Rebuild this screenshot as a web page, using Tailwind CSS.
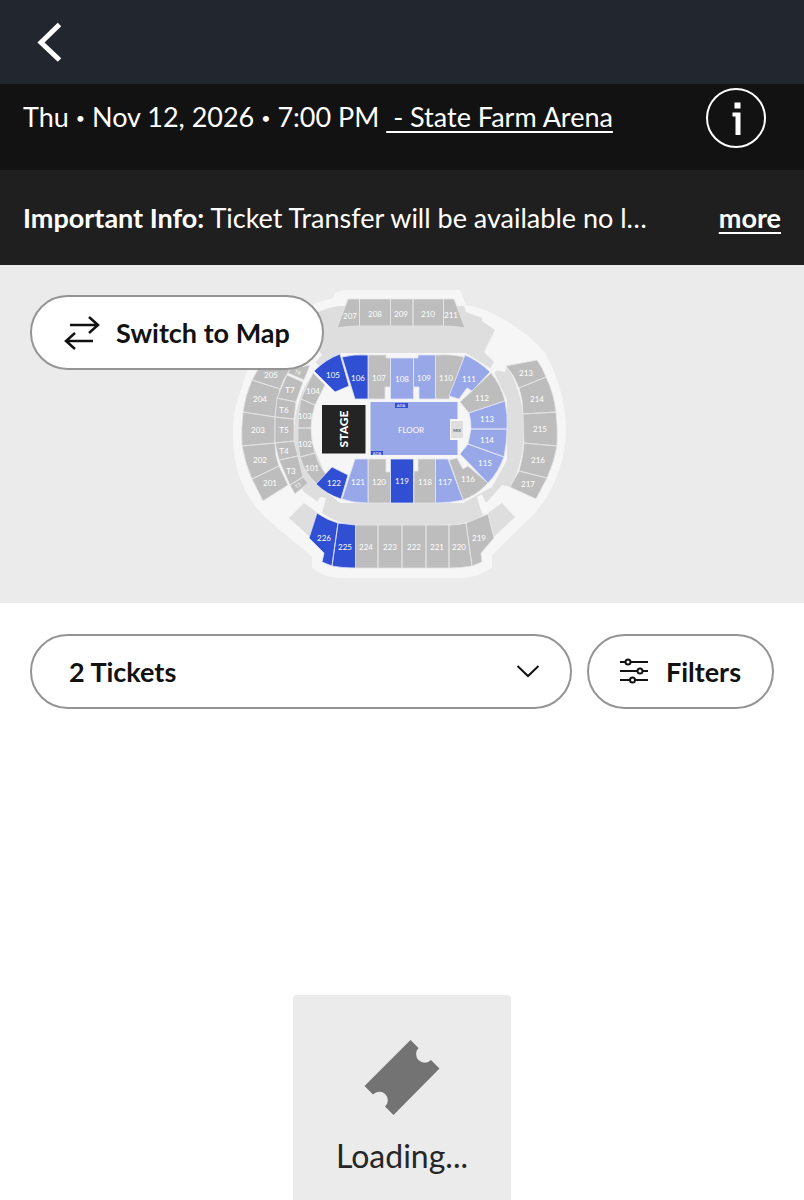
<!DOCTYPE html>
<html lang="en">
<head>
  <meta charset="UTF-8">
  <meta name="viewport" content="width=device-width, initial-scale=1.0">
  <title>State Farm Arena - Tickets</title>
  <script src="https://cdn.jsdelivr.net/npm/@tailwindcss/browser@4"></script>
</head>

<body class="min-h-screen flex flex-col bg-white text-[#121212] font-['Lato',sans-serif] text-[27px] leading-9">

  <!-- top bar -->
  <header class="bg-[#22262e] h-[84px] flex items-center px-[37px]">
    <button aria-label="Back" class="text-white">
      <svg class="w-6 h-10" viewBox="0 0 24 40" fill="none" stroke="currentColor" stroke-width="5">
        <path d="M22.500 2.500L4 20.500L22.500 38" />
      </svg>
    </button>
  </header>

  <!-- event info -->
  <section class="bg-[#121212] text-white h-[86px] flex items-start justify-between pl-[23px] pr-[37px]">
    <p class="mt-[15px] whitespace-nowrap">Thu <span class="text-base align-[3px]">•</span> Nov 12, 2026 <span class="text-base align-[3px]">•</span> 7:00 PM <a href="#venue" class="underline decoration-2 underline-offset-4 whitespace-pre"> - State Farm Arena</a></p>
    <button aria-label="Event info" class="mt-[3px] shrink-0">
      <svg class="size-[62px]" viewBox="0 0 62 62" fill="none">
        <circle cx="31" cy="31" r="29" stroke="white" stroke-width="2" />
        <path d="M29.500 15.500h6v6h-6zM27.500 25.500h8v22.500h-5v-18.500h-3z" fill="white" />
      </svg>
    </button>
  </section>

  <section class="bg-[#1f1f1f] text-white h-[95px] flex items-center justify-between gap-4 px-[23px]">
    <p class="whitespace-nowrap"><b class="font-bold">Important Info:</b> Ticket Transfer will be available no l…</p>
    <a href="#info" class="font-bold underline decoration-2 underline-offset-4">more</a>
  </section>

  <!-- seat map -->
  <section class="relative bg-[#ebebeb] flex justify-center py-6">
    <svg class="w-[340px] h-[290px]" viewBox="232 289 340 290" role="img" aria-label="Seat map">
      <path fill="#f6f6f6" d="M345 290H458Q461 290 462 295L466 305Q488 309 505 320Q530 335 545 353Q557 374 562 397Q566 415 566 433Q565 452 560 467Q554 486 545 500L535 513L492 555V567Q478 578 462 578H340Q322 577 312 568V557L265 517Q248 500 242 483Q233 465 233 430Q233 408 242 387Q250 350 297 313Q312 303 333 298L335 293Z" />
      <g fill="#dedede">
        <path d="M300 323Q318 309 338 306H464L466 312L482 318V321L495 330L484 352L494 362L490 369L505 372L507 366Q524 395 524 430Q523 466 510 487L502 485L487 502H484L478 496L480 504L484 514Q470 525 440 525H355Q338 524 322 513L325 501L318 502L304 492Q290 470 294 430Q296 398 310 378L316 370L314 364L322 355Z" />
        <path d="M304 503L314 510L317 513L310 537L289 518ZM502 503L515 517L494 537L488 513Z" />
      </g>
      <path fill="#f6f6f6" d="M316 370L341 353H466L493 370L507 400V460L492 487L463 503H340L316 484L325 474L311 440V405L325 385L314 373Z" />
      <path fill="#f6f6f6" d="M305 372L312 360L320 366L316 376ZM490 370L494 364L498 369L493 375ZM320 497L326 498L321 514L313 510ZM477 497L482 494L489 510L482 514Z" />

      <g fill="#bdbdbd" stroke="#e6e6e6" stroke-width="0.8">
        <!-- upper level -->
        <path d="M348 299H359.500V326Q347 326 337 328ZM359.500 299H390.500V326H359.500ZM390.500 299H413V326H390.500ZM413 299H443.500V326H413ZM443.500 299H454L465 328Q455 326 443.500 326Z" />
        <path d="M262 362L290 369Q284 378 280 389L252 380ZM252 380L280 389Q276 404 275 417L243 412Q245 396 252 380ZM243 412L275 417V443L242 446Q241 428 243 412ZM242 446L275 443Q275 456 279 466L252 479Q245 463 242 446ZM252 479L279 466L288 485L263 501Z" />
        <path d="M506 366L537 360Q543 368 546 377L519 388Q514 375 506 366ZM519 388L546 377Q554 393 556 412L523 414Q523 400 519 388ZM523 414L556 412Q558 430 557 446L524 443ZM524 443L557 446Q554 463 547 478L519 471Q523 458 524 443ZM519 471L547 478L536 499L510 487Z" />
        <path d="M355.500 525H378V568H355.500ZM378 525H402V568H378ZM402 525H426V568H402ZM426 525H449V568H426ZM449 525Q458 525 466 523L472 566Q461 568 449 568ZM466 523L488 514L494 538L481 553L482 562L472 566Z" />
        <!-- terrace -->
        <path d="M290 369L310 365L304 380L288 373ZM287 375L303 382L296 402L277 398ZM277 398L296 402L294 419L275 417ZM275 417L294 419V441L275 443ZM275 443L294 441L298 456L279 460ZM279 460L298 456L303 477L290 485ZM290 485L303 477L308 483L295 494Z" />
        <!-- lower level -->
        <path d="M313 373L325 385L315 405L301 399ZM301 399L315 405Q311 417 311 428H298Q298 412 301 399ZM298 428H311Q311 441 315 453L300 457Q297 443 298 428ZM300 457L315 453Q319 466 326 474L317 484Q305 474 300 457Z" />
        <path d="M368 355H386V358H390.500V387H385V399H368ZM435.500 355Q452 354 464 357L449 399H435.500ZM491 373Q501 385 505 401L469 413L460 402ZM488 483Q477 495 463 500L449 460L457 458L463 469L468 466ZM414 471H418V459H435.500V503H414ZM368 459H386V472H390.500V503H368Z" />
      </g>

      <g fill="#98a7e8" stroke="#e3e7fa" stroke-width="0.8">
        <path d="M390.500 358H413.500V399H390.500ZM413.500 358H418V355H435.500V399H419V387H413.500ZM465 355Q479 361 490 372L472 391L467 388L459 399L449 396Z" />
        <path d="M505 401Q508 415 507 429H471Q471 420 469 413ZM471 429H507Q507 443 504 457L468 444ZM468 444L504 457Q498 473 488 483L460 454Z" />
        <path d="M435.500 459H448L463 500Q450 503 435.500 503ZM355 459H368V503Q353 503 342 499Z" />
      </g>
      <path fill="#98a7e8" d="M370.500 402H457.500V419H450V440H457.500V455H370.500Z" />
      <path fill="#dedede" d="M451 421H463V438H451Z" />

      <g fill="#304fd2" stroke="#dfe4fa" stroke-width="0.8">
        <path d="M314 371Q326 359 340 354L349 386L335 392ZM342 357Q354 354 368 355V399H355ZM332 467L348 475L341 499Q326 494 316 484ZM390.500 459H413.500V503H390.500Z" />
        <path d="M317 513Q327 520 338 523L332 566L322 562L324 553L309 538ZM338 523L355.500 525V568Q342 568 332 566Z" />
      </g>
      <path fill="#304fd2" d="M395 403H408V408H395ZM371 451H383V455H371Z" />
      <path fill="#242424" d="M322 405H365.500V453.500H322Z" />

      <g fill="white" text-anchor="middle" class="font-['Lato',sans-serif] text-[8px]">
        <text x="350" y="319">207</text><text x="375" y="317">208</text><text x="401" y="317">209</text><text x="428" y="317">210</text><text x="451" y="318">211</text>
        <text x="271" y="378">205</text><text x="260" y="402">204</text><text x="258" y="433">203</text><text x="260" y="463">202</text><text x="270" y="486">201</text>
        <text x="290" y="393">T7</text><text x="284" y="413">T6</text><text x="284" y="433">T5</text><text x="284" y="454">T4</text><text x="291" y="474">T3</text>
        <text x="313" y="394">104</text><text x="305" y="419">103</text><text x="305" y="447">102</text><text x="312" y="471">101</text>
        <text x="333" y="378">105</text><text x="358" y="381">106</text><text x="379" y="381">107</text><text x="402" y="382">108</text><text x="424" y="381">109</text><text x="446" y="381">110</text><text x="469" y="382">111</text>
        <text x="482" y="401">112</text><text x="487" y="422">113</text><text x="487" y="443">114</text><text x="485" y="466">115</text><text x="468" y="482">116</text>
        <text x="445" y="485">117</text><text x="425" y="485">118</text><text x="402" y="484">119</text><text x="379" y="485">120</text><text x="358" y="485">121</text><text x="334" y="486">122</text>
        <text x="526" y="376">213</text><text x="537" y="402">214</text><text x="540" y="432">215</text><text x="538" y="463">216</text><text x="528" y="487">217</text>
        <text x="324" y="541">226</text><text x="345" y="550">225</text><text x="366" y="550">224</text><text x="390" y="550">223</text><text x="414" y="550">222</text><text x="437" y="550">221</text><text x="459" y="550">220</text><text x="479" y="541">219</text>
        <text x="411" y="433" class="text-[8px]">FLOOR</text>
        <text transform="translate(348 429) rotate(-90)" class="text-[12px] font-black">STAGE</text>
        <text x="401" y="407" class="text-[4px]">ADA</text><text x="377" y="455" class="text-[4px]">ADA</text>
        <text transform="translate(297 374) rotate(25)" class="text-[5px]">T8</text>
        <text transform="translate(299 487) rotate(-35)" class="text-[5px]">T2</text>
        <text x="457" y="432" fill="#555555" class="text-[4px] font-bold">MIX</text>
      </g>
    </svg>

    <button class="absolute left-[30px] top-[30px] h-[75px] flex items-center gap-4 px-8 rounded-full border-2 border-[#949494] bg-white font-bold">
      <svg class="w-9 h-9" viewBox="0 0 36 36" fill="none" stroke="currentColor" stroke-width="2.500">
        <path d="M6 10H34M25 2L34 10L25 18M29 26H2M11 18L2 26L11 34" />
      </svg>
      Switch to Map
    </button>
  </section>

  <!-- ticket filters -->
  <section class="flex gap-[15px] px-[30px] pt-[31px]">
    <div class="relative flex-1">
      <select aria-label="Number of tickets" class="appearance-none w-full h-[75px] pl-[37px] pr-16 rounded-full border-2 border-[#949494] bg-white font-bold">
        <option>1 Ticket</option>
        <option selected>2 Tickets</option>
        <option>3 Tickets</option>
        <option>4 Tickets</option>
      </select>
      <svg class="absolute right-8 top-[30px] w-6 h-4 pointer-events-none" viewBox="0 0 24 16" fill="none" stroke="currentColor" stroke-width="2">
        <path d="M1.500 2L12 12L22.500 2" />
      </svg>
    </div>
    <button class="h-[75px] flex items-center gap-4 px-[31px] rounded-full border-2 border-[#949494] bg-white font-bold">
      <svg class="w-[30px] h-[30px]" viewBox="0 0 30 30" fill="none" stroke="currentColor" stroke-width="2">
        <path d="M0 5H6M10 5H28M0 14H18M22 14H28M0 23H10M15 23H28" />
        <circle cx="8" cy="5" r="2.500" />
        <circle cx="20" cy="14" r="2.500" />
        <circle cx="12.500" cy="23" r="2.500" />
      </svg>
      Filters
    </button>
  </section>

  <main class="flex-1 flex justify-center pt-[286px]">
    <div class="w-[218px] flex flex-col items-center rounded-t bg-[#ebebeb] pt-[45px] text-[#262626]">
      <svg class="w-[76px] h-[76px]" viewBox="0 0 76 76" fill="#737373">
        <path d="M46.500 0L54.500 8A8.500 8.500 0 1 0 67 20L75.500 28.500L29.500 75L21 66.500A8.500 8.500 0 1 0 9 54.500L0.500 46Z" />
      </svg>
      <p class="mt-5 text-[32px] leading-10">Loading...</p>
    </div>
  </main>

</body>

</html>
